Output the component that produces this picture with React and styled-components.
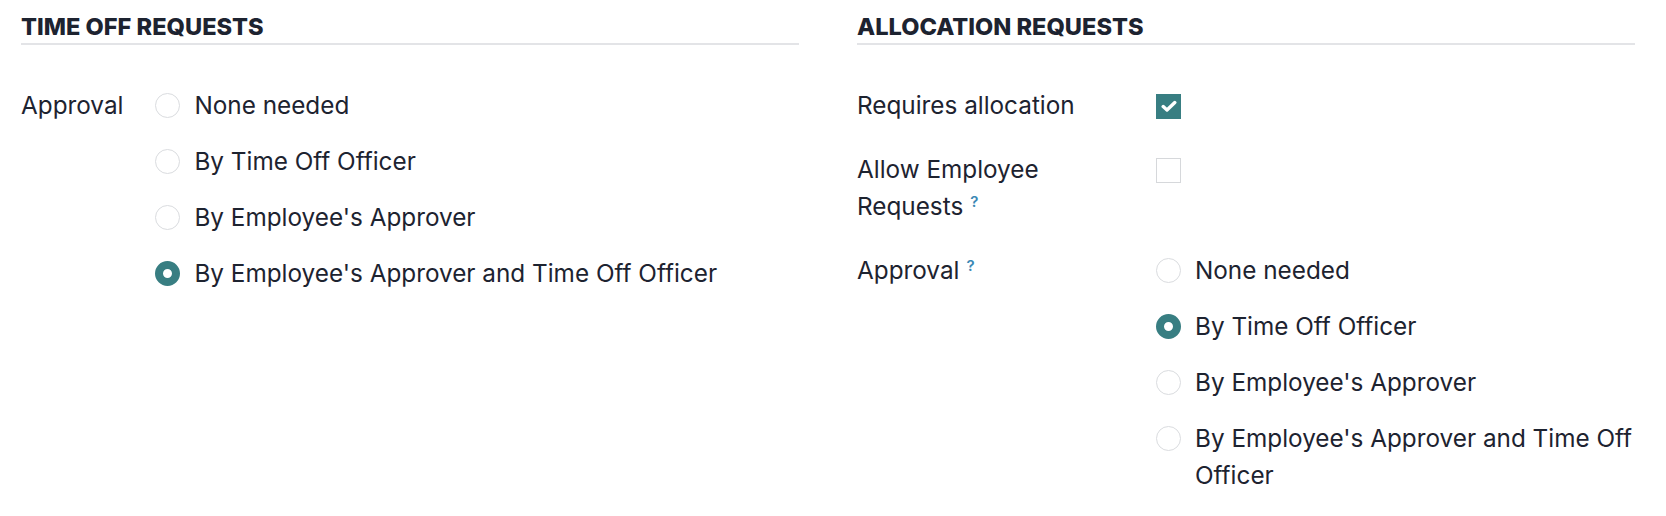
import styled, { createGlobalStyle } from 'styled-components';

const GlobalStyle = createGlobalStyle`
  body {
    margin: 0;
    background: #ffffff;
    font-family: Inter, "Noto Sans", sans-serif;
    color: #1d2330;
  }
`;

const Radio = ({ checked, label }) => (
  <RadioItem>
    <RadioDot checked={checked} />
    <RadioLabel>{label}</RadioLabel>
  </RadioItem>
);

const Check = ({ checked }) => (
  <CheckBox checked={checked}>
    {checked && (
      <svg width="16" height="13" viewBox="0 0 16 13">
        <path d="M2.2 6.6 L6 10 L13.8 2.6" fill="none" stroke="#fff" strokeWidth="3.4" strokeLinecap="round" strokeLinejoin="round" />
      </svg>
    )}
  </CheckBox>
);

const App = () => {
  return (
    <Page>
      <GlobalStyle />
      <Section>
        <Title>Time Off Requests</Title>
        <Group labelWidth="auto" gap="32px">
          <Label>Approval</Label>
          <RadioList>
            <Radio label="None needed" />
            <Radio label="By Time Off Officer" />
            <Radio label="By Employee's Approver" />
            <Radio checked label="By Employee's Approver and Time Off Officer" />
          </RadioList>
        </Group>
      </Section>
      <Section>
        <Title>Allocation Requests</Title>
        <Group labelWidth="270px" gap="29px">
          <Label>Requires allocation</Label>
          <Cell><Check checked /></Cell>
          <Label>
            <Line>Allow Employee</Line>{' '}
            <Line>Requests<Help>?</Help></Line>
          </Label>
          <Cell><Check /></Cell>
          <Label>Approval<Help>?</Help></Label>
          <RadioList>
            <Radio label="None needed" />
            <Radio checked label="By Time Off Officer" />
            <Radio label="By Employee's Approver" />
            <Radio label="By Employee's Approver and Time Off Officer" />
          </RadioList>
        </Group>
      </Section>
    </Page>
  );
}

const Page = styled.div`
  display: grid;
  grid-template-columns: 1fr 1fr;
  column-gap: 58px;
  padding: 13px 31px 20px 21px;
  min-height: 516px;
  box-sizing: border-box;
`;

const Section = styled.div`
  display: flex;
  flex-direction: column;
`;

const Title = styled.div`
  font-size: 23.6px;
  font-weight: 800;
  text-transform: uppercase;
  letter-spacing: 0;
  line-height: 28px;
  padding-bottom: 2px;
  border-bottom: 2px solid #e3e4e7;
  margin-bottom: 41.5px;
`;

const Group = styled.div`
  display: grid;
  grid-template-columns: ${props => props.labelWidth} 1fr;
  column-gap: ${props => props.gap};
  row-gap: 27px;
  align-items: start;
`;

const Label = styled.div`
  font-size: 24.3px;
  line-height: 37px;
`;

const Line = styled.span`
  white-space: nowrap;
`;

const Cell = styled.div`
  display: flex;
  padding-top: 7px;
  min-height: 30px;
`;

const Help = styled.span`
  display: inline-block;
  font-size: 15px;
  line-height: 13px;
  font-weight: 600;
  color: #3a88b5;
  margin-left: 7px;
  vertical-align: 8px;
`;

const RadioList = styled.div`
  display: flex;
  flex-direction: column;
  gap: 19px;
`;

const RadioItem = styled.div`
  display: flex;
  align-items: flex-start;
  gap: 14px;
`;

const RadioDot = styled.span`
  flex: none;
  width: 25px;
  height: 25px;
  margin-top: 6px;
  border-radius: 50%;
  box-sizing: border-box;
  background: #fff;
  border: ${props => props.checked ? '8px solid #387e82' : '1.5px solid #dadcdf'};
`;

const RadioLabel = styled.span`
  font-size: 24.3px;
  line-height: 37px;
`;

const CheckBox = styled.span`
  width: 25px;
  height: 25px;
  box-sizing: border-box;
  display: flex;
  align-items: center;
  justify-content: center;
  background: ${props => props.checked ? '#387e82' : '#fff'};
  border: ${props => props.checked ? 'none' : '1.5px solid #d6d8db'};
`;

export default App;
